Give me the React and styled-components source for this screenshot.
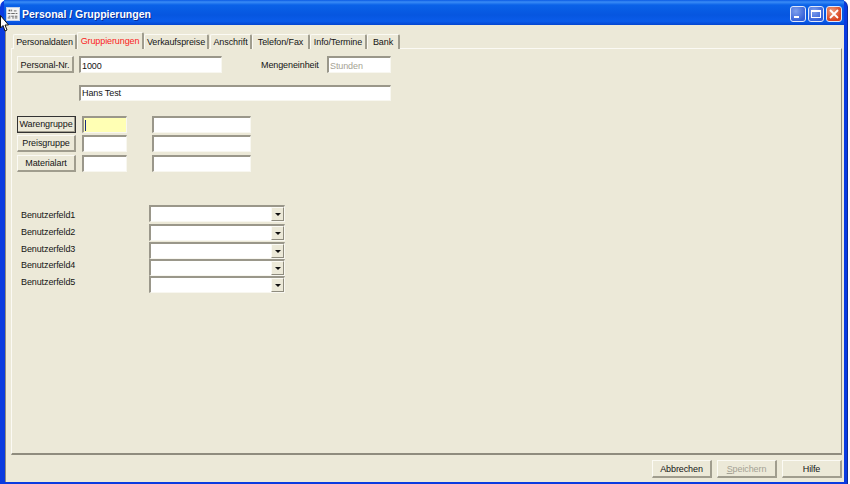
import React from "react";
import styled, { createGlobalStyle } from "styled-components";

const Global = createGlobalStyle`
  html, body { margin: 0; padding: 0; background: #fff; }
  #root { width: 850px; height: 484px; overflow: hidden; }
  * { box-sizing: border-box; }
`;

const Page = styled.div`
  position: relative;
  width: 850px;
  height: 484px;
  padding-right: 2px;
  font-family: "Liberation Sans", Arial, sans-serif;
  font-size: 9px;
  letter-spacing: -0.1px;
  color: #151515;
  overflow: hidden;
`;

const Frame = styled.div`
  display: flex;
  flex-direction: column;
  height: 100%;
  border-radius: 7px 7px 0 0;
  background: #0a3be0;
  border-right: 1px solid #0a2a9a;
  padding: 0 3px 2px 5px;
`;

const TitleBar = styled.header`
  display: flex;
  align-items: center;
  flex: 0 0 25px;
  padding: 3px 2px 0 2px;
  margin-left: -1px;
  background: linear-gradient(180deg, #0a5ae4 0%, #3a8cf6 8%, #0a62e8 20%, #0656e0 60%, #0a5cea 85%, #0446d0 100%);
`;

const TitleText = styled.h1`
  margin: 0 0 0 2px;
  color: #fff;
  font-size: 10.5px;
  font-weight: 700;
  letter-spacing: 0;
  text-shadow: 1px 1px 0 #0a2f9a;
  flex: 1;
`;

const WinButton = styled.div`
  width: 16px;
  height: 16px;
  margin-left: 2px;
  border: 1px solid #dfe8fb;
  border-radius: 3px;
  background: ${(p) =>
    p.$close
      ? "radial-gradient(circle at 35% 30%, #f0a080, #d8431f 70%)"
      : "radial-gradient(circle at 35% 30%, #7fa0ec, #3560d8 75%)"};
  display: flex;
  align-items: center;
  justify-content: center;
`;

const Client = styled.div`
  flex: 1;
  display: flex;
  flex-direction: column;
  min-height: 0;
  background: #ece9d8;
  border-left: 1px solid #8f8c7e;
  padding: 0 2px 0 5px;
`;

const TabStrip = styled.nav`
  display: flex;
  align-items: flex-end;
  height: 24px;
  padding: 0 0 0 2px;
  margin-bottom: -1px;
  position: relative;
  z-index: 1;
`;

const Tab = styled.div`
  width: ${(p) => p.$w}px;
  height: ${(p) => (p.$active ? 17 : 15)}px;
  margin-left: ${(p) => p.$ml || 0}px;
  display: flex;
  align-items: center;
  justify-content: center;
  background: #ece9d8;
  white-space: nowrap;
  color: ${(p) => (p.$active ? "#fb1c1c" : "#151515")};
  border-top: 1px solid #fbfaf4;
  border-left: 1px solid #fbfaf4;
  border-right: 2px solid #a09d8e;
  border-radius: 2px 2px 0 0;
`;

const Panel = styled.section`
  flex: 1;
  min-height: 0;
  border-top: 1px solid #fbfaf4;
  border-left: 1px solid #fbfaf4;
  border-right: 1px solid #8f8c7e;
  border-bottom: 2px solid #8f8c7e;
  padding: 7px 0 0 5px;
`;

const Row = styled.div`
  display: flex;
  align-items: center;
  margin-top: ${(p) => p.$mt || 0}px;
  margin-left: ${(p) => p.$ml || 0}px;
`;

const PushButton = styled.div`
  width: ${(p) => p.$w}px;
  height: ${(p) => p.$h || 17}px;
  padding-top: ${(p) => p.$pt || 0}px;
  display: flex;
  align-items: center;
  justify-content: center;
  white-space: nowrap;
  background: #ece9d8;
  color: ${(p) => (p.$disabled ? "#a5a294" : "#151515")};
  border-top: 1px solid #fbfaf4;
  border-left: 1px solid #fbfaf4;
  border-right: 2px solid #a09d8e;
  border-bottom: 2px solid #a09d8e;
  outline: ${(p) => (p.$focus ? "1px solid #333" : "none")};
  outline-offset: -1px;
`;

const Field = styled.div`
  width: ${(p) => p.$w}px;
  height: ${(p) => p.$h || 17}px;
  margin-left: ${(p) => p.$ml || 0}px;
  flex: none;
  display: flex;
  align-items: center;
  padding: ${(p) => p.$pt || 0}px 0 ${(p) => p.$pb || 0}px 1px;
  white-space: nowrap;
  background: ${(p) => p.$bg || "#fff"};
  color: ${(p) => (p.$muted ? "#a5a294" : "#151515")};
  border-top: 2px solid #9a978a;
  border-left: 2px solid #9a978a;
  border-right: 1px solid #f8f7f0;
  border-bottom: 1px solid #f8f7f0;
`;

const Caret = styled.span`
  width: 1px;
  height: 11px;
  background: #1a2a80;
`;

const Label = styled.span`
  width: ${(p) => p.$w}px;
  margin-left: ${(p) => p.$ml || 0}px;
  margin-top: ${(p) => p.$mt || 0}px;
  flex: none;
  white-space: nowrap;
`;

const GroupGrid = styled.div`
  display: grid;
  grid-template-columns: 59px 45px 99px;
  grid-template-rows: 17px 18px 17px;
  column-gap: 6px;
  row-gap: 2px;
  margin-top: 15px;
  & > :nth-child(3n) { margin-left: 19px; }
`;

const UserFields = styled.div`
  display: flex;
  flex-direction: column;
  margin: 33px 0 0 4px;
`;

const UserRow = styled.div`
  display: flex;
  align-items: flex-start;
  height: ${(p) => p.$h}px;
`;

const UserLabel = styled.span`
  width: 128px;
  flex: none;
  line-height: 12px;
  margin-top: ${(p) => p.$mt}px;
`;

const Combo = styled.div`
  width: 136px;
  height: 17px;
  display: flex;
  justify-content: flex-end;
  background: #fff;
  border-top: 2px solid #9a978a;
  border-left: 2px solid #9a978a;
  border-right: 1px solid #f8f7f0;
  border-bottom: 1px solid #f8f7f0;
`;

const ComboArrow = styled.div`
  width: 13px;
  background: #ece9d8;
  border-top: 1px solid #fbfaf4;
  border-left: 1px solid #fbfaf4;
  border-right: 1px solid #8f8c7e;
  border-bottom: 1px solid #8f8c7e;
  display: flex;
  align-items: center;
  justify-content: center;
  &::after {
    content: "";
    border-top: 3px solid #111;
    border-left: 3px solid transparent;
    border-right: 3px solid transparent;
  }
`;

const Footer = styled.footer`
  flex: 0 0 27px;
  display: flex;
  justify-content: flex-end;
  align-items: flex-start;
  gap: 5px;
  padding: 5px 0 0 0;
`;

const Underlined = styled.span`
  text-decoration: underline;
`;

const Cursor = styled.svg`
  position: absolute;
  left: 0;
  top: 15px;
`;

const tabs = [
  ["Personaldaten", 64, false, 0],
  ["Gruppierungen", 67, true, 0],
  ["Verkaufspreise", 65, false, 0],
  ["Anschrift", 42, false, 1],
  ["Telefon/Fax", 58, false, 0],
  ["Info/Termine", 57, false, 0],
  ["Bank", 33, false, 0],
];

const groups = [
  ["Warengruppe", true],
  ["Preisgruppe", false],
  ["Materialart", false],
];

const users = [
  ["Benutzerfeld1", 19, 4],
  ["Benutzerfeld2", 18, 2],
  ["Benutzerfeld3", 17, 1],
  ["Benutzerfeld4", 17, 0],
  ["Benutzerfeld5", 17, 0],
];

const AppIcon = () => (
  <svg width="14" height="14" viewBox="0 0 16 16">
    <rect x="0.5" y="0.5" width="15" height="15" fill="#f4f4f4" stroke="#c8d4ea" />
    <g fill="#555">
      <rect x="3" y="3" width="2" height="2" />
      <rect x="6" y="3" width="1" height="2" />
      <rect x="9" y="4" width="3" height="1" />
      <rect x="2" y="7" width="3" height="1" />
      <rect x="6" y="7" width="4" height="1" />
      <rect x="11" y="7" width="2" height="1" />
      <rect x="3" y="10" width="2" height="1" />
      <rect x="6" y="10" width="3" height="1" />
      <rect x="10" y="10" width="3" height="1" />
      <rect x="2" y="12" width="3" height="1" />
      <rect x="7" y="12" width="2" height="1" />
      <rect x="10" y="12" width="3" height="1" />
    </g>
  </svg>
);

export default function App() {
  return (
    <Page>
      <Global />
      <Frame>
        <TitleBar>
          <AppIcon />
          <TitleText>Personal / Gruppierungen</TitleText>
          <WinButton>
            <svg width="14" height="14" viewBox="0 0 14 14">
              <rect x="3" y="9" width="5" height="2" fill="#fff" />
            </svg>
          </WinButton>
          <WinButton>
            <svg width="14" height="14" viewBox="0 0 14 14">
              <rect x="2.5" y="3.5" width="9" height="7" fill="none" stroke="#fff" />
              <rect x="2" y="3" width="10" height="2" fill="#fff" />
            </svg>
          </WinButton>
          <WinButton $close>
            <svg width="14" height="14" viewBox="0 0 14 14">
              <path d="M3 3 L11 11 M11 3 L3 11" stroke="#fff" strokeWidth="1.8" />
            </svg>
          </WinButton>
        </TitleBar>
        <Client>
          <TabStrip>
            {tabs.map(([t, w, a, ml]) => (
              <Tab key={t} $w={w} $active={a} $ml={ml}>{t}</Tab>
            ))}
          </TabStrip>
          <Panel>
            <Row>
              <PushButton $w={57} $pt={1}>Personal-Nr.</PushButton>
              <Field $w={143} $ml={5} $pt={1}>1000</Field>
              <Label $w={66} $ml={39} $mt={1}>Mengeneinheit</Label>
              <Field $w={64} $muted $pt={1}>Stunden</Field>
            </Row>
            <Row $mt={12} $ml={62}>
              <Field $w={312} $h={16} $pb={1}>Hans Test</Field>
            </Row>
            <GroupGrid>
              {groups.map(([g, focus]) => (
                <React.Fragment key={g}>
                  <PushButton $w={59} $focus={focus}>{g}</PushButton>
                  <Field $w={45} $bg={focus ? "#ffffb4" : "#fff"}>{focus && <Caret />}</Field>
                  <Field $w={99} />
                </React.Fragment>
              ))}
            </GroupGrid>
            <UserFields>
              {users.map(([u, h, mt]) => (
                <UserRow key={u} $h={h}>
                  <UserLabel $mt={mt}>{u}</UserLabel>
                  <Combo><ComboArrow /></Combo>
                </UserRow>
              ))}
            </UserFields>
          </Panel>
          <Footer>
            <PushButton $w={60} $h={18}>Abbrechen</PushButton>
            <PushButton $w={60} $h={18} $disabled><span><Underlined>S</Underlined>peichern</span></PushButton>
            <PushButton $w={60} $h={18}>Hilfe</PushButton>
          </Footer>
        </Client>
      </Frame>
      <Cursor width="10" height="19" viewBox="0 0 10 19">
        <path d="M0.5 0.5 L0.5 13 L3 10.5 L5 16 L7 15 L5 10 L8.5 10 Z" fill="#fff" stroke="#111" strokeWidth="1" />
      </Cursor>
    </Page>
  );
}
